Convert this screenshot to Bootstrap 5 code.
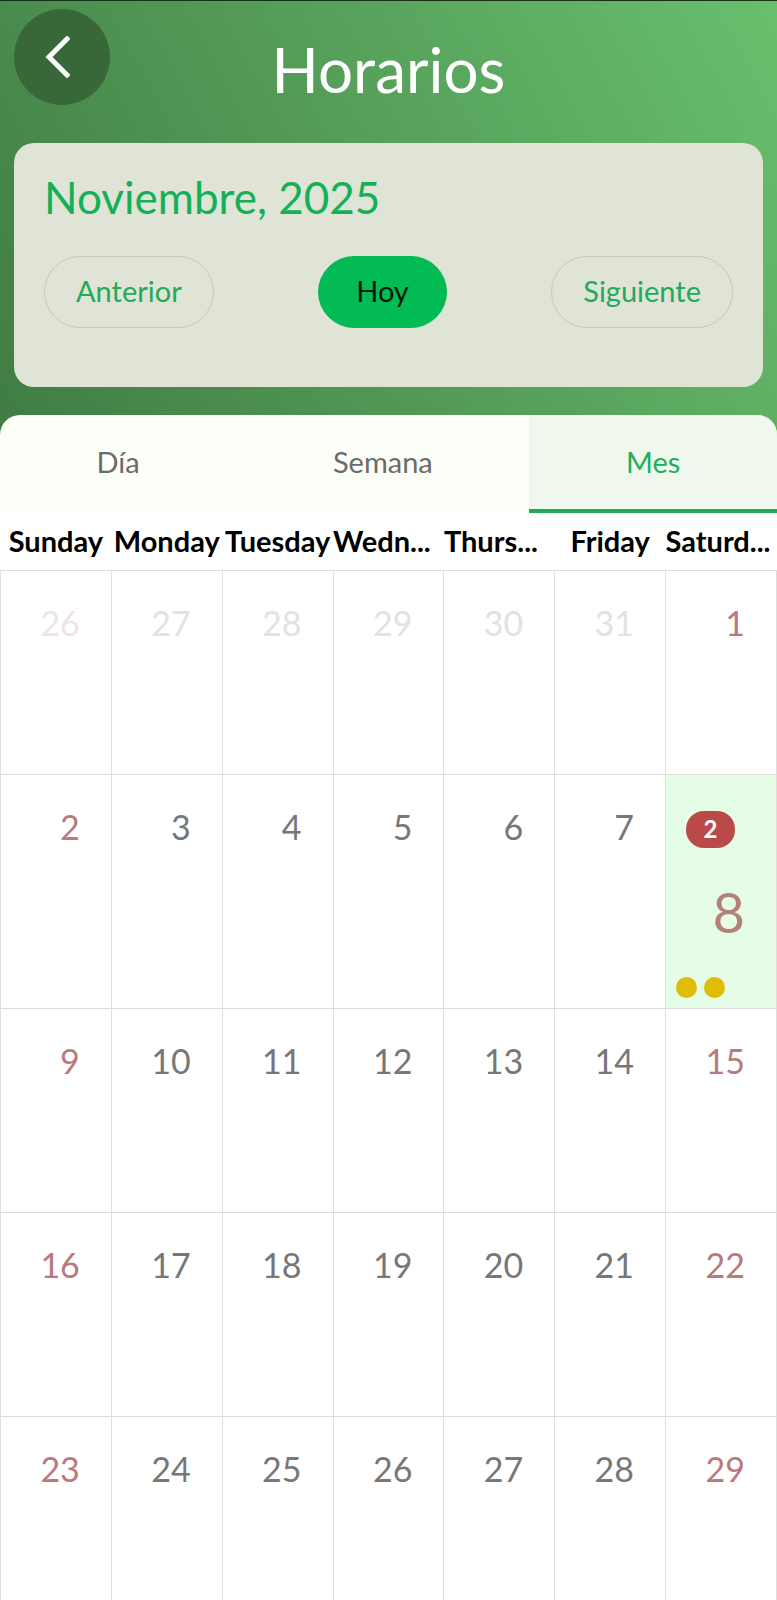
<!DOCTYPE html>
<html lang="es">
<head>
<meta charset="utf-8">
<meta name="viewport" content="width=device-width, initial-scale=1">
<title>Horarios</title>
<link href="https://cdn.jsdelivr.net/npm/bootstrap@5.3.0/dist/css/bootstrap.min.css" rel="stylesheet">
<style>
  body { font-family: Lato, "Open Sans", sans-serif; background: #fff; }
  .app-shell { height: 100vh; overflow: hidden; border-top: 1px solid #173019; background: linear-gradient(62deg, #407c43, #69bf6e) 0 0 / 100% 440px no-repeat; }
  .top-bar { height: 142px; padding: 8px 14px; }
  .back-btn { width: 96px; height: 96px; background: #38683a; border: 0; }
  .back-btn svg { width: 26px; height: 42px; margin-right: 10px; }
  .app-title { font-size: 62px; line-height: 120px; color: #fff; font-weight: 400; }
  .month-card { margin: 0 14px 28px; padding: 22px 30px 59px; border-radius: 20px; background: #dfe4d6; }
  .month-name { font-size: 44px; line-height: 64px; color: #14b057; margin-bottom: 27px; font-weight: 400; }
  .pill { height: 72px; padding: 0 31px 2px; font-size: 29px; line-height: 68px; color: #22aa5b; border: 1px solid #c5cabd; border-radius: 36px; background: none; }
  .pill-today { color: #021a06; background: #02bb54; border-color: #02bb54; padding: 0 37px 2px; }
  .view-tabs { border-radius: 20px 20px 0 0; background: #fcfef8; overflow: hidden; }
  .view-tab { height: 98px; border: 0; border-bottom: 4px solid transparent; font-size: 29px; color: #6b6c68; background: none; }
  .view-tab.active { color: #1fae5c; background: #f0f8ee; border-color: #22a75d; }
  .cal { table-layout: fixed; width: 100%; border-collapse: collapse; background: #fff; }
  .cal th { height: 57px; padding: 0; font-size: 29px; line-height: 56px; font-weight: 700; color: #000; white-space: nowrap; text-align: center; }
  .cal th.cut { text-align: left; }
  .cal td { height: 204px; padding: 29px 31px 0 0; border: 1px solid #dedede; vertical-align: top; text-align: right; font-size: 34px; line-height: 46px; color: #777; }
  .cal td.rest { color: #ba797a; }
  .cal td.outside { color: #e2e2e2; }
  .cal td.outside.rest { color: #efe4e4; }
  .cal td.today { height: 234px; padding: 36px 0 0; background: #e5fce6; color: #b5807a; }
  .count-badge { width: 49px; height: 37px; margin-left: 20px; border-radius: 18px; background: #b94a48; color: #fff; font-size: 24px; line-height: 36px; font-weight: 700; }
  .today-num { font-size: 56px; line-height: 64px; margin: 32px 31px 33px 0; }
  .event-dot { width: 21px; height: 21px; border-radius: 50%; background: #e0bc06; }
  .event-dots { gap: 7px; padding-left: 10px; }
</style>
</head>
<body>
<div class="app-shell">
  <header class="top-bar position-relative">
    <button type="button" class="back-btn rounded-circle d-flex align-items-center justify-content-center position-absolute" aria-label="Volver">
      <svg viewBox="0 0 26 42" fill="none" stroke="#fff" stroke-width="5"><path d="M23 3 5 21 23 39" stroke-linecap="square"/></svg>
    </button>
    <h1 class="app-title text-center m-0">Horarios</h1>
  </header>

  <section class="month-card">
    <h2 class="month-name">Noviembre, 2025</h2>
    <div class="d-flex justify-content-between">
      <button type="button" class="pill">Anterior</button>
      <button type="button" class="pill pill-today">Hoy</button>
      <button type="button" class="pill">Siguiente</button>
    </div>
  </section>

  <nav class="view-tabs d-flex">
    <button type="button" class="view-tab flex-fill">Día</button>
    <button type="button" class="view-tab flex-fill">Semana</button>
    <button type="button" class="view-tab flex-fill active" aria-current="page">Mes</button>
  </nav>

  <table class="cal">
    <thead>
      <tr><th>Sunday</th><th>Monday</th><th>Tuesday</th><th class="cut">Wedn...</th><th class="cut">Thurs...</th><th>Friday</th><th class="cut">Saturd...</th></tr>
    </thead>
    <tbody>
      <tr><td class="outside rest">26</td><td class="outside">27</td><td class="outside">28</td><td class="outside">29</td><td class="outside">30</td><td class="outside">31</td><td class="rest">1</td></tr>
      <tr><td class="rest">2</td><td>3</td><td>4</td><td>5</td><td>6</td><td>7</td>
        <td class="today">
          <div class="count-badge text-center">2</div>
          <div class="today-num">8</div>
          <div class="event-dots d-flex"><span class="event-dot"></span><span class="event-dot"></span></div>
        </td></tr>
      <tr><td class="rest">9</td><td>10</td><td>11</td><td>12</td><td>13</td><td>14</td><td class="rest">15</td></tr>
      <tr><td class="rest">16</td><td>17</td><td>18</td><td>19</td><td>20</td><td>21</td><td class="rest">22</td></tr>
      <tr><td class="rest">23</td><td>24</td><td>25</td><td>26</td><td>27</td><td>28</td><td class="rest">29</td></tr>
    </tbody>
  </table>
</div>
<script src="https://cdn.jsdelivr.net/npm/bootstrap@5.3.0/dist/js/bootstrap.bundle.min.js"></script>
</body>
</html>
